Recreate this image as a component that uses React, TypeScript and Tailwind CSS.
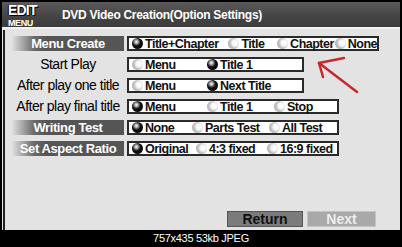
import React from 'react';

type Opt = { label: string; w?: string; on?: boolean };
type Row = { label: string; dark?: boolean; box: string; opts: Opt[] };

const rows: Row[] = [
  {
    label: 'Menu Create',
    dark: true,
    box: 'w-[252px]',
    opts: [
      { label: 'Title+Chapter', w: 'w-[97px]', on: true },
      { label: 'Title', w: 'w-[49px]' },
      { label: 'Chapter', w: 'w-[58px]' },
      { label: 'None' },
    ],
  },
  {
    label: 'Start Play',
    box: 'w-[177px]',
    opts: [
      { label: 'Menu', w: 'w-[75px]' },
      { label: 'Title 1', on: true },
    ],
  },
  {
    label: 'After play one title',
    box: 'w-[177px]',
    opts: [
      { label: 'Menu', w: 'w-[75px]' },
      { label: 'Next Title', on: true },
    ],
  },
  {
    label: 'After play final title',
    box: 'w-[212px]',
    opts: [
      { label: 'Menu', w: 'w-[75px]', on: true },
      { label: 'Title 1', w: 'w-[67px]' },
      { label: 'Stop' },
    ],
  },
  {
    label: 'Writing Test',
    dark: true,
    box: 'w-[212px]',
    opts: [
      { label: 'None', w: 'w-[60px]', on: true },
      { label: 'Parts Test', w: 'w-[77px]' },
      { label: 'All Test' },
    ],
  },
  {
    label: 'Set Aspect Ratio',
    dark: true,
    box: 'w-[212px]',
    opts: [
      { label: 'Original', w: 'w-[64px]', on: true },
      { label: '4:3 fixed', w: 'w-[71px]' },
      { label: '16:9 fixed' },
    ],
  },
];

const Radio = ({ on }: { on?: boolean }) =>
  on ? (
    <span className="w-[11px] h-[11px] rounded-full shrink-0 bg-[radial-gradient(circle_at_40%_35%,#ffffff_0px,#9a9a9a_2px,#111_4px,#000_100%)]" />
  ) : (
    <span className="w-[11px] h-[11px] rounded-full shrink-0 bg-[radial-gradient(circle_at_65%_45%,#ffffff_0px,#f4f4f4_3px,#c4c4c4_5px,#9c9c9c_100%)]" />
  );

const App = () => {
  return (
    <div className="w-[402px] h-[247px] bg-black flex flex-col font-['Liberation_Sans',Arial,sans-serif] overflow-hidden">
      <div className="mx-[2px] mt-[2px] h-[228px] flex flex-col bg-[#e3e3e3]">
        {/* header */}
        <div className="h-[27px] shrink-0 flex items-center bg-[linear-gradient(180deg,#5a5a5a,#444_60%,#3c3c3c)] border-b-2 border-[#f2f2f2]">
          <div className="w-[60px] h-full shrink-0 flex flex-col pl-[6px]">
            <span className="text-[14px] leading-[16px] font-black text-white tracking-[-0.8px] [text-shadow:1px_1px_0_#000,-1px_0_0_#000]">
              EDIT
            </span>
            <span className="text-[9px] leading-[10px] font-bold text-white tracking-[-0.4px]">
              MENU
            </span>
          </div>
          <span className="text-white font-bold text-[12px] tracking-[-0.3px]">
            DVD Video Creation(Option Settings)
          </span>
        </div>
        {/* content */}
        <div className="flex-1 flex flex-col border-l-2 border-[#222] ml-[1px] mt-[1px] pt-[6px] pl-[7px]">
          <div className="flex flex-col gap-[6px]">
            {rows.map((r) => (
              <div key={r.label} className="flex items-center gap-[3px] h-[15px]">
                <div
                  className={
                    r.dark
                      ? 'w-[112px] h-[15px] flex items-center justify-center text-white font-bold text-[13px] tracking-[-0.4px] bg-[linear-gradient(90deg,#e0e0e0_0px,#6a6a6a_22px,#555_34px,#555_100%)]'
                      : 'w-[112px] h-[15px] flex items-center justify-center text-black text-[14px] tracking-[-0.5px] whitespace-nowrap'
                  }
                >
                  {r.label}
                </div>
                <div className={`${r.box} h-[15px] bg-white border-2 border-[#2a2a2a] flex items-center pl-[3px]`}>
                  {r.opts.map((o) => (
                    <div key={o.label} className={`${o.w ?? 'flex-1'} flex items-center gap-[2px]`}>
                      <Radio on={o.on} />
                      <span className="text-[12.5px] leading-[12px] font-bold text-[#111] tracking-[-0.5px] whitespace-nowrap">
                        {o.label}
                      </span>
                    </div>
                  ))}
                </div>
              </div>
            ))}
          </div>
          <div className="mt-auto mb-[3px] flex justify-end gap-[4px] pr-[24px]">
            <div className="w-[76px] h-[16px] bg-[#7b7b7b] border border-[#555] flex items-center justify-center text-[14px] font-bold text-[#111]">
              Return
            </div>
            <div className="w-[69px] h-[16px] bg-[#a9a9a9] border border-[#c4c4c4] flex items-center justify-center text-[14px] font-bold text-[#eeeeee]">
              Next
            </div>
          </div>
        </div>
      </div>
      <div className="flex-1 flex items-center justify-center text-white text-[11px] tracking-[-0.3px]">
        757x435 53kb JPEG
      </div>
      {/* red arrow annotation */}
      <svg className="absolute left-0 top-0" width="402" height="247" viewBox="0 0 402 247">
        <g stroke="#c22a2e" strokeWidth="2.5" fill="none" strokeLinecap="round">
          <line x1="319" y1="63" x2="357" y2="92" />
          <line x1="319" y1="63" x2="344" y2="58" />
          <line x1="319" y1="63" x2="323" y2="77" />
        </g>
      </svg>
    </div>
  );
};

export default App;
